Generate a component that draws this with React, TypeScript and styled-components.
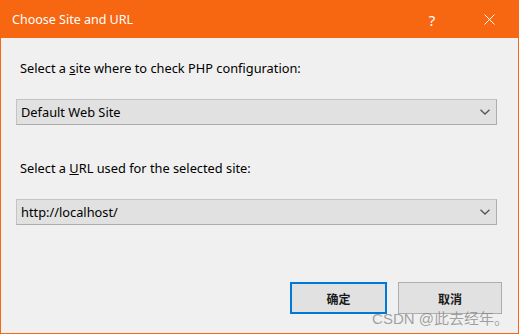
import { createGlobalStyle, styled } from "styled-components";

const GlobalStyle = createGlobalStyle`
  html, body {
    margin: 0;
    padding: 0;
    background: #ffffff;
  }
  body {
    font-family: "Noto Sans", "Open Sans", sans-serif;
    font-size: 12.8px;
    color: #000;
  }
`;

const Window = styled("div")`
  position: relative;
  width: 519px;
  height: 334px;
  box-sizing: border-box;
  border: 1px solid #f76611;
  background: #f0f0f0;
  display: flex;
  flex-direction: column;
`;

const TitleBar = styled("div")`
  height: 37px;
  background: #f76611;
  display: flex;
  flex-direction: row;
  align-items: center;
  padding-left: 11px;
  color: #ffffff;
`;

const Title = styled("span")`
  flex: 1;
  font-size: 12.5px;
  margin-top: -1px;
`;

const TitleButton = styled("div")<{ $width: number }>`
  width: ${(props) => props.$width}px;
  height: 37px;
  display: flex;
  align-items: center;
  justify-content: center;
  color: #ffffff;
  font-size: 15px;
`;

const Body = styled("div")`
  flex: 1;
  display: flex;
  flex-direction: column;
  padding: 22px 21px 19px 15px;
`;

const Label = styled("div")<{ $top: number }>`
  margin-top: ${(props) => props.$top}px;
  padding-left: 4px;
  line-height: 16px;
  height: 16px;
`;

const ComboBox = styled("div")`
  margin-top: 23px;
  height: 26px;
  box-sizing: border-box;
  border: 1px solid #c4c4c4;
  border-bottom-color: #adadad;
  border-right-color: #adadad;
  background: #e1e1e1;
  display: flex;
  flex-direction: row;
  align-items: center;
  padding: 0 6px 0 4px;
`;

const ComboText = styled("span")`
  flex: 1;
`;

const Footer = styled("div")`
  margin-top: auto;
  display: flex;
  flex-direction: row;
  justify-content: flex-end;
  gap: 11px;
  margin-right: -5px;
`;

const Button = styled("button")<{ $primary?: boolean; $width: number }>`
  width: ${(props) => props.$width}px;
  height: 32px;
  box-sizing: border-box;
  background: #e1e1e1;
  border: ${(props) => (props.$primary ? "2px solid #0078d7" : "1px solid #adadad")};
  font-family: "Noto Sans CJK SC", sans-serif;
  font-size: 12px;
  font-weight: 700;
  color: #1a1a1a;
  padding: 0;
`;

const Watermark = styled("div")`
  position: absolute;
  right: 9px;
  bottom: 5px;
  font-family: "Liberation Sans", "Noto Sans CJK SC", sans-serif;
  font-size: 15px;
  color: rgba(125, 125, 125, 0.7);
  pointer-events: none;
`;

const Chevron = () => (
  <svg width="10" height="6" viewBox="0 0 10 6">
    <path d="M0.5 0.8 L5 5 L9.5 0.8" fill="none" stroke="#555" strokeWidth="1.3" />
  </svg>
);

const Close = () => (
  <svg width="11" height="11" viewBox="0 0 11 11">
    <path d="M0.5 0.5 L10.5 10.5 M10.5 0.5 L0.5 10.5" stroke="#fff" strokeWidth="1" />
  </svg>
);

const App = () => {
  return (
    <>
      <GlobalStyle />
      <Window>
        <TitleBar>
          <Title>Choose Site and URL</Title>
          <TitleButton $width={56}>?</TitleButton>
          <TitleButton $width={58}>
            <Close />
          </TitleButton>
        </TitleBar>
        <Body>
          <Label $top={0}>
            Select a <u>s</u>ite where to check PHP configuration:
          </Label>
          <ComboBox>
            <ComboText>Default Web Site</ComboText>
            <Chevron />
          </ComboBox>
          <Label $top={35}>
            Select a <u>U</u>RL used for the selected site:
          </Label>
          <ComboBox>
            <ComboText>http://localhost/</ComboText>
            <Chevron />
          </ComboBox>
          <Footer>
            <Button $primary $width={97}>确定</Button>
            <Button $width={104}>取消</Button>
          </Footer>
        </Body>
        <Watermark>CSDN @此去经年。</Watermark>
      </Window>
    </>
  );
};

export default App;
